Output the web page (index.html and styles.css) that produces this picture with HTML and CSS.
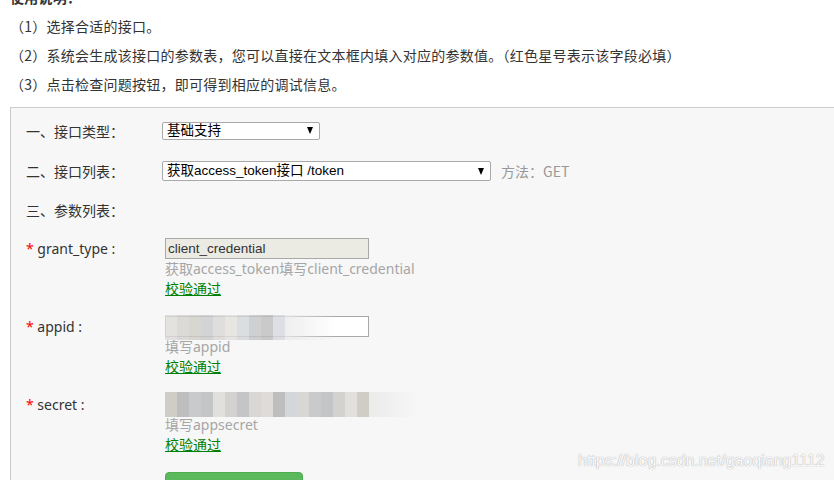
FILE: index.html
```html
<!DOCTYPE html>
<html lang="zh-CN">
<head>
<meta charset="utf-8">
<link rel="stylesheet" href="styles.css">
</head>
<body>
<div class="page">
  <div class="intro">
    <p class="intro-title">使用说明：</p>
    <p>（1）选择合适的接口。</p>
    <p>（2）系统会生成该接口的参数表，您可以直接在文本框内填入对应的参数值。（红色星号表示该字段必填）</p>
    <p>（3）点击检查问题按钮，即可得到相应的调试信息。</p>
  </div>

  <div class="panel">
    <div class="row row-1">
      <div class="label">一、接口类型：</div>
      <div class="select select-short"><span class="select-text">基础支持</span><span class="caret"></span></div>
    </div>
    <div class="row row-2">
      <div class="label">二、接口列表：</div>
      <div class="select select-long"><span class="select-text">获取access_token接口 /token</span><span class="caret"></span></div>
      <span class="method">方法：GET</span>
    </div>
    <div class="row row-3">
      <div class="label">三、参数列表：</div>
    </div>

    <div class="param">
      <div class="plabel"><span class="star">*</span> grant_type :</div>
      <div class="pctl">
        <div class="input input-readonly">client_credential</div>
        <div class="hint">获取access_token填写client_credential</div>
        <div class="ok">校验通过</div>
      </div>
    </div>

    <div class="param">
      <div class="plabel"><span class="star">*</span> appid :</div>
      <div class="pctl">
        <div class="input input-blur">
          <div class="mosaic mosaic-a">
            <i class="m1"></i><i class="m2"></i><i class="m3"></i><i class="m4"></i><i class="m5"></i><i class="m6"></i><i class="m7"></i><i class="m8"></i><i class="m9"></i><i class="m10"></i><i class="fade"></i>
          </div>
        </div>
        <div class="hint">填写appid</div>
        <div class="ok">校验通过</div>
      </div>
    </div>

    <div class="param">
      <div class="plabel"><span class="star">*</span> secret :</div>
      <div class="pctl">
        <div class="input input-blur">
          <div class="mosaic mosaic-b">
            <i class="m3"></i><i class="m9"></i><i class="m4"></i><i class="m8"></i><i class="m6"></i><i class="m2"></i><i class="m8"></i><i class="m5"></i><i class="m1"></i><i class="m9"></i><i class="m7"></i><i class="m5"></i><i class="m4"></i><i class="m8"></i><i class="m2"></i><i class="m6"></i><i class="m3"></i><i class="fade"></i>
          </div>
        </div>
        <div class="hint">填写appsecret</div>
        <div class="ok">校验通过</div>
      </div>
    </div>

    <div class="actions">
      <button class="btn">检查问题</button>
    </div>
  </div>

  <div class="watermark">https://blog.csdn.net/gaoqiang1112</div>
</div>
</body>
</html>
```

FILE: styles.css
```css
html, body {
  margin: 0;
  padding: 0;
  background: #fff;
  overflow: hidden;
}

body {
  font-family: "Noto Sans", "Noto Sans CJK SC", sans-serif;
  font-size: 14px;
  color: #333;
}

.page {
  position: relative;
  width: 834px;
  height: 480px;
  overflow: hidden;
}

.intro {
  padding-left: 10px;
  margin-top: -17px;
}

.intro p {
  margin: 0;
  line-height: 29px;
  font-family: "Noto Sans CJK SC", sans-serif;
  font-size: 14px;
  letter-spacing: 0.25px;
  color: #333;
  white-space: nowrap;
}

.intro .intro-title {
  font-weight: bold;
}

.panel {
  margin: 8px 0 0 10px;
  width: 900px;
  border: 1px solid #ccc;
  border-right: none;
  background: #f7f7f7;
  padding: 13px 0 40px 15px;
  display: flex;
  flex-direction: column;
}

.row {
  display: flex;
  align-items: center;
}

.row-1 { height: 19px; }
.row-2 { height: 20px; margin-top: 21px; }
.row-3 { height: 20px; margin-top: 19px; }

.label {
  width: 136px;
  flex: none;
  font-family: "Noto Sans CJK SC", sans-serif;
  font-size: 14px;
  line-height: 20px;
  color: #333;
}

.select {
  box-sizing: border-box;
  display: flex;
  align-items: center;
  justify-content: space-between;
  background: #fff;
  border: 1px solid #a9a9a9;
  border-radius: 2px;
  padding: 0 6px 0 4px;
  overflow: hidden;
}

.select-short { width: 158px; height: 18px; }
.select-long { width: 329px; height: 20px; }

.select-text {
  font-family: "Liberation Sans", "Noto Sans CJK SC", sans-serif;
  font-size: 13.5px;
  line-height: 16px;
  color: #000;
  white-space: nowrap;
}

.caret {
  width: 0;
  height: 0;
  border-left: 3.5px solid transparent;
  border-right: 3.5px solid transparent;
  border-top: 7px solid #000;
  flex: none;
}

.method {
  margin-left: 10px;
  font-family: "Noto Sans CJK SC", sans-serif;
  font-size: 14px;
  color: #999;
}

.param {
  display: flex;
  margin-top: 18px;
}

.plabel {
  width: 139px;
  flex: none;
  font-family: "Noto Sans", "Noto Sans CJK SC", sans-serif;
  font-size: 14px;
  line-height: 21px;
  color: #333;
}

.star {
  color: #f00;
}

.pctl {
  display: flex;
  flex-direction: column;
  align-items: flex-start;
}

.input {
  box-sizing: border-box;
  width: 204px;
  height: 21px;
  border: 1px solid #a9a9a9;
  background: #fff;
  font-family: "Liberation Sans", sans-serif;
  font-size: 13.5px;
  line-height: 19px;
  padding-left: 2px;
  color: #333;
  position: relative;
}

.input-readonly {
  background: #ebebe4;
}

.hint {
  font-family: "Noto Sans", "Noto Sans CJK SC", sans-serif;
  font-size: 14px;
  line-height: 20px;
  color: #a6a6a6;
  white-space: nowrap;
}

.ok {
  font-family: "Noto Sans CJK SC", sans-serif;
  font-size: 14px;
  line-height: 19px;
  color: #008000;
  text-decoration: underline;
  text-underline-offset: 1px;
}

.mosaic {
  position: absolute;
  left: -1px;
  display: flex;
}

.mosaic i {
  display: block;
  width: 12px;
  height: 100%;
}

.mosaic-a {
  top: -2px;
  height: 25px;
  opacity: 0.8;
}

.mosaic-a i { height: 25px; }

.mosaic-b {
  top: -3px;
  height: 25px;
}

.mosaic-b i { height: 25px; }

.mosaic .m1 { background: #dedbd8; }
.mosaic .m2 { background: #d4d2d0; }
.mosaic .m3 { background: #cfcdc6; }
.mosaic .m4 { background: #c9cacb; }
.mosaic .m5 { background: #d8d7d4; }
.mosaic .m6 { background: #e2e0dd; }
.mosaic .m7 { background: #d3d6da; }
.mosaic .m8 { background: #c4c5c6; }
.mosaic .m9 { background: #bebebe; }
.mosaic .m10 { background: #d6d8de; }

.mosaic .fade {
  width: 50px;
  background: linear-gradient(to right, #ecebeb, rgba(245, 245, 245, 0));
}

.actions {
  margin-top: 18px;
  padding-left: 139px;
}

.btn {
  width: 138px;
  height: 34px;
  background: #5cb85c;
  border: 1px solid #4cae4c;
  border-radius: 4px;
  color: #fff;
  font-family: "Noto Sans CJK SC", sans-serif;
  font-size: 14px;
}

.watermark {
  position: absolute;
  left: 578px;
  top: 452px;
  font-family: "Liberation Sans", sans-serif;
  font-size: 16px;
  color: #fafafa;
  text-shadow: 0 0 1px #a8a8a8, 0 0 1px #c8c8c8;
  white-space: nowrap;
}
```
